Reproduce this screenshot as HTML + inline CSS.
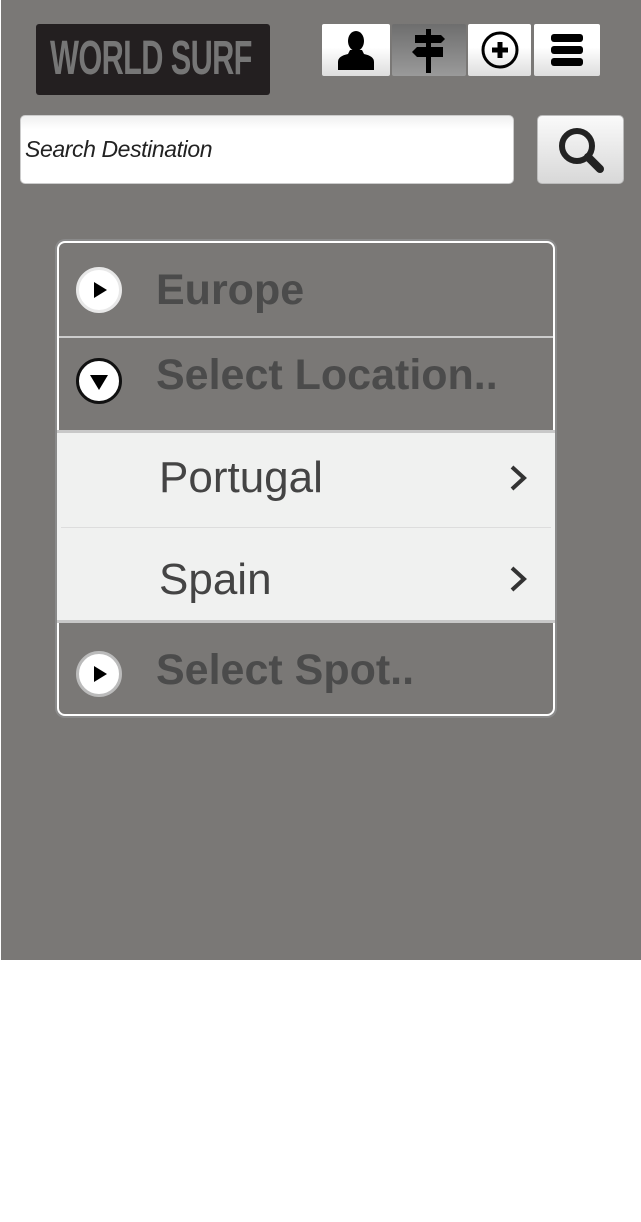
<!DOCTYPE html>
<html><head><style>
*{margin:0;padding:0;box-sizing:border-box}
body{width:641px;height:1222px;background:#fff;font-family:"Liberation Sans",sans-serif;position:relative;overflow:hidden}
.bg{position:absolute;left:1px;top:0;width:640px;height:960px;background:#7a7876}
.abs{position:absolute}
.logo{left:36px;top:24px;width:234px;height:71px;background:#231f20;border-radius:3px;color:#767676;font-weight:bold;font-size:48px;letter-spacing:-1px;line-height:71px;white-space:nowrap;overflow:hidden}
.logo span{position:absolute;left:14px;top:-1px;transform:scaleX(.64);transform-origin:left center}
.btn{top:24px;height:52px;background:linear-gradient(#fff 45%,#ddd);border-radius:2px;display:flex;align-items:center;justify-content:center}
.search{left:20px;top:115px;width:494px;height:69px;background:linear-gradient(#f0f0f0,#fff 20%);border-radius:5px;border:1px solid #ccc;font-style:italic;font-size:23px;color:#222;line-height:66px;padding-left:4px;letter-spacing:-0.4px}
.sbtn{left:537px;top:115px;width:87px;height:69px;background:linear-gradient(#fafafa,#d8d8d8);border-radius:5px;border:1px solid #bbb;display:flex;align-items:center;justify-content:center}
.panel{left:57px;top:241px;width:498px;height:475px;border:2px solid #fff;border-radius:8px;box-shadow:0 0 0 2px #8a8a8a}
.row{left:59px;width:494px;color:#4b4b4b;font-weight:bold;font-size:43px}
.circ{position:absolute;left:17px;width:46px;height:46px;border-radius:50%;background:#fff;border:3px solid #e8e8e8}
.list{left:57px;top:430px;width:498px;height:193px;background:#f0f1f0;border-top:3px solid #c8c8c8;border-bottom:3px solid #c8c8c8}
.item{position:absolute;left:102px;font-size:44px;color:#444}
.chev{position:absolute;left:450px}
</style></head><body>
<div class="bg"></div>
<div class="abs logo"><span>WORLD SURF</span></div>
<div class="abs btn" style="left:322px;width:68px"><svg width="44" height="40" viewBox="0 0 44 40"><ellipse cx="22" cy="11" rx="8" ry="10"/><path d="M16 20 L28 20 L30 24 Q40 26 40 32 L40 40 L4 40 L4 32 Q4 26 14 24Z"/></svg></div>
<div class="abs btn" style="left:392px;width:74px;background:linear-gradient(#6e6e6e,#9a9a9a)"><svg width="40" height="46" viewBox="0 0 40 46"><rect x="17" y="2" width="5" height="44"/><path d="M6 8 H32 L36 12 L32 16 H6Z"/><path d="M34 20 H8 L3 25 L8 30 H34Z"/></svg></div>
<div class="abs btn" style="left:468px;width:63px"><svg width="40" height="40" viewBox="0 0 40 40"><circle cx="20" cy="20" r="17" fill="none" stroke="#000" stroke-width="3"/><path d="M20 12V28M12 20H28" stroke="#000" stroke-width="5"/></svg></div>
<div class="abs btn" style="left:534px;width:66px"><svg width="36" height="36" viewBox="0 0 36 36"><rect x="2" y="2" width="32" height="8" rx="3"/><rect x="2" y="14" width="32" height="8" rx="3"/><rect x="2" y="26" width="32" height="8" rx="3"/></svg></div>
<div class="abs search">Search Destination</div>
<div class="abs sbtn"><svg width="50" height="50" viewBox="0 0 50 50"><circle cx="21" cy="21" r="15" fill="none" stroke="#222" stroke-width="6"/><path d="M32 32 L44 44" stroke="#222" stroke-width="8" stroke-linecap="round"/></svg></div>
<div class="abs panel"></div>
<div class="abs" style="left:59px;top:336px;width:494px;height:2px;background:#ccc"></div>
<div class="abs row" style="top:243px;height:93px"><div class="circ" style="top:24px"><svg width="40" height="40" viewBox="0 0 40 40"><path d="M15 12 L28 20 L15 28Z"/></svg></div><div style="position:absolute;left:97px;top:23px">Europe</div></div>
<div class="abs row" style="top:338px;height:92px"><div class="circ" style="top:20px;border:3px solid #111"><svg width="40" height="40" viewBox="0 0 40 40"><path d="M11 14 L29 14 L20 29Z"/></svg></div><div style="position:absolute;left:97px;top:13px">Select Location..</div></div>
<div class="abs list">
<div class="item" style="top:20px">Portugal</div>
<div class="abs" style="left:4px;top:94px;width:490px;height:1px;background:#ddd"></div>
<div class="item" style="top:122px">Spain</div>
<svg class="chev" style="top:30px" width="22" height="30" viewBox="0 0 22 30"><path d="M5 4 L17 15 L5 26" fill="none" stroke="#333" stroke-width="4"/></svg>
<svg class="chev" style="top:131px" width="22" height="30" viewBox="0 0 22 30"><path d="M5 4 L17 15 L5 26" fill="none" stroke="#333" stroke-width="4"/></svg>
</div>
<div class="abs row" style="top:623px;height:90px"><div class="circ" style="top:28px;border-color:#bbb"><svg width="40" height="40" viewBox="0 0 40 40"><path d="M15 12 L28 20 L15 28Z"/></svg></div><div style="position:absolute;left:97px;top:23px">Select Spot..</div></div>
</body></html>
